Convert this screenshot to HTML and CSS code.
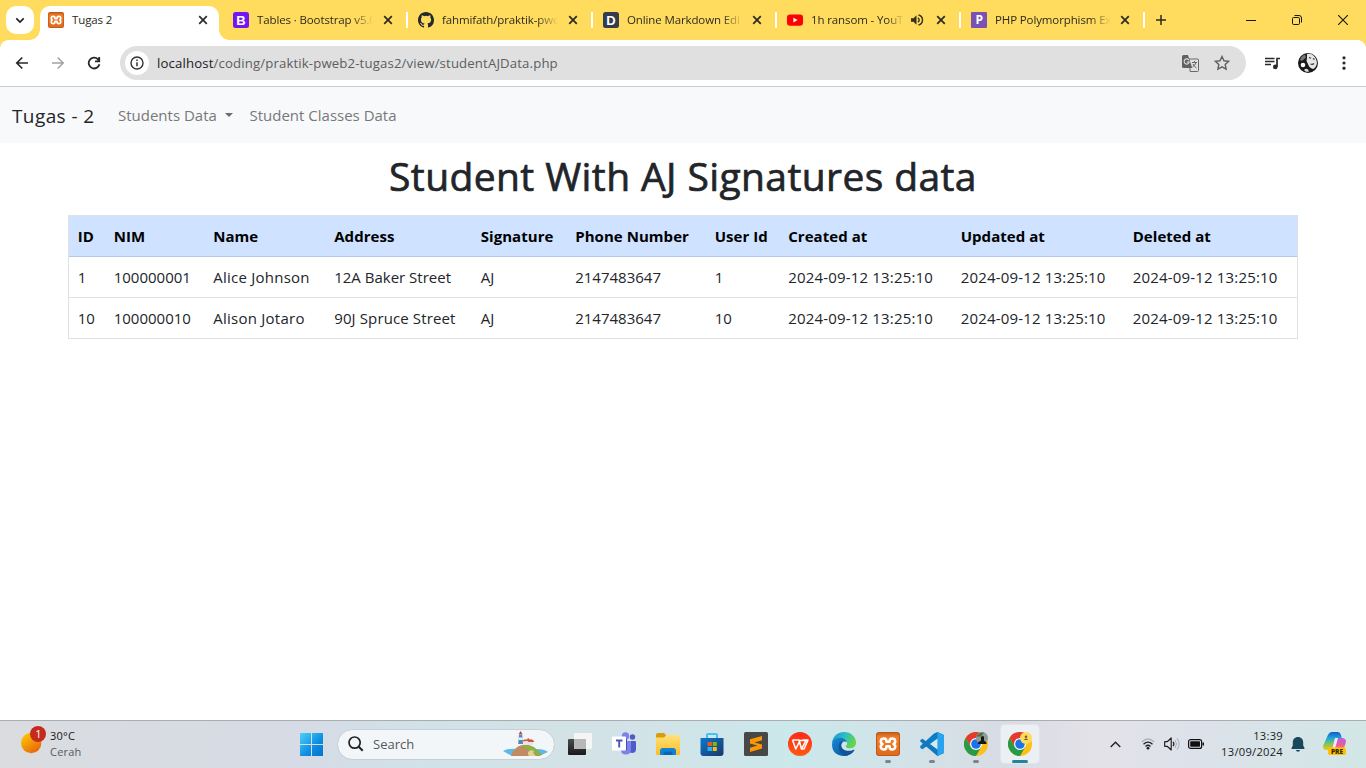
FILE: index.html
```html
<!DOCTYPE html>
<html lang="en">
<head>
<meta charset="utf-8">
<title>Tugas 2</title>
<link rel="stylesheet" href="styles.css">
</head>
<body>
<svg class="defs" width="0" height="0">
  <defs>
    <linearGradient id="gx" x1="0" y1="0" x2="0" y2="1"><stop offset="0" stop-color="#c9611c"/><stop offset=".2" stop-color="#f47d28"/><stop offset="1" stop-color="#e06a1c"/></linearGradient>
    <symbol id="xampp" viewBox="0 0 24 24"><rect width="24" height="24" rx="3" fill="#b9591b"/><rect x="1" y="1" width="22" height="22" rx="2" fill="url(#gx)"/><path d="M8 6.500C4 6.500 4 11 6.500 12 4 13 4 17.500 8 17.500q2.500 0 2.500-3.300h3q0 3.300 2.500 3.300c4 0 4-4.500 1.500-5.500 2.500-1 2.500-5.500-1.500-5.500q-2.500 0-2.500 3.300h-3Q10.500 6.500 8 6.500z" fill="none" stroke="#fff" stroke-width="2.600" stroke-linejoin="round"/></symbol>
    <symbol id="close" viewBox="0 0 10 10"><path d="M1.200 1.200l7.600 7.600M8.800 1.200L1.200 8.800" stroke="#2b2a26" stroke-width="1.700" fill="none"/></symbol>
    <symbol id="chrome" viewBox="0 0 24 24"><circle cx="12" cy="12" r="12" fill="#fbc116"/><path d="M12 6h10.400A12 12 0 0 0 1.600 6l5.200 9z" fill="#e33b2e"/><path d="M1.600 6A12 12 0 0 0 12 24l5.200-9H6.800z" fill="#269a47"/><circle cx="12" cy="12" r="6" fill="#fff"/><circle cx="12" cy="12" r="4.800" fill="#1a73e8"/></symbol>
  </defs>
</svg>
<div class="screen">
  <header class="tabs">
    <button class="tab-search"><svg width="10" height="7" viewBox="0 0 10 7"><path d="M1.300 1.300L5 5l3.700-3.700" fill="none" stroke="#222" stroke-width="1.700"/></svg></button>
    <div class="tab active"><svg class="fav"><use href="#xampp"/></svg><span class="title">Tugas 2</span><svg class="x"><use href="#close"/></svg></div>
    <div class="tab"><svg class="fav" viewBox="0 0 16 16"><rect width="16" height="16" rx="2.500" fill="#7416f4"/><text x="8" y="12.700" class="fav-b">B</text></svg><span class="title fade">Tables · Bootstrap v5.0</span><svg class="x"><use href="#close"/></svg></div>
    <div class="tab sep"><svg class="fav" viewBox="0 0 16 16"><path fill="#24292f" d="M8 0C3.580 0 0 3.580 0 8c0 3.540 2.290 6.530 5.470 7.590.4.070.55-.17.55-.38 0-.19-.01-.82-.01-1.490-2.010.37-2.530-.49-2.690-.94-.09-.23-.48-.94-.82-1.130-.28-.15-.68-.52-.01-.53.63-.01 1.080.58 1.230.82.72 1.210 1.870.87 2.330.66.07-.52.28-.87.51-1.070-1.780-.2-3.640-.89-3.640-3.950 0-.87.31-1.590.82-2.150-.08-.2-.36-1.020.08-2.120 0 0 .67-.21 2.200.82a7.500 7.500 0 0 1 4 0c1.530-1.040 2.200-.82 2.200-.82.44 1.100.16 1.920.08 2.120.51.56.82 1.270.82 2.150 0 3.070-1.870 3.750-3.650 3.950.29.25.54.73.54 1.480 0 1.070-.01 1.930-.01 2.200 0 .21.15.46.55.38A8 8 0 0 0 16 8c0-4.420-3.580-8-8-8z"/></svg><span class="title fade">fahmifath/praktik-pwe</span><svg class="x"><use href="#close"/></svg></div>
    <div class="tab sep"><svg class="fav" viewBox="0 0 16 16"><rect width="16" height="16" rx="2.500" fill="#353d4c"/><text x="8" y="12.800" class="fav-b">D</text></svg><span class="title fade">Online Markdown Edi</span><svg class="x"><use href="#close"/></svg></div>
    <div class="tab sep"><svg class="fav" viewBox="0 0 16 16"><rect y="2.500" width="16" height="11.200" rx="3" fill="#f00"/><path d="M6.400 5.700v4.800l4.200-2.400z" fill="#fff"/></svg><span class="title fade audio">1h ransom - YouT</span><svg class="snd" viewBox="0 0 14 12"><path d="M1 4.200h2.500L6.500 1.300v9.400l-3-2.900H1z" fill="#33301f"/><path d="M8 3.700q2.400 2.300 0 4.600M8.500 1q4 1 4 5t-4 5" fill="none" stroke="#33301f" stroke-width="1.400"/></svg><svg class="x"><use href="#close"/></svg></div>
    <div class="tab sep"><svg class="fav" viewBox="0 0 16 16"><rect width="16" height="16" rx="1" fill="#7952b3"/><text x="8.200" y="12.300" class="fav-p">P</text></svg><span class="title fade">PHP Polymorphism Ex</span><svg class="x"><use href="#close"/></svg></div>
    <div class="newtab sep"><svg width="10" height="10" viewBox="0 0 10 10"><path d="M5 0v10M0 5h10" stroke="#2c2a20" stroke-width="1.500"/></svg></div>
    <div class="winbtns">
      <svg width="10" height="10" viewBox="0 0 10 10"><path d="M0 5.500h10" stroke="#17160f"/></svg>
      <svg width="10" height="10" viewBox="0 0 10 10" fill="none" stroke="#17160f"><rect x=".5" y="2.500" width="7" height="7" rx="1.200"/><path d="M2.500.5H7Q9.500.5 9.500 3v4.500"/></svg>
      <svg width="10" height="10" viewBox="0 0 10 10"><path d="M0 0l10 10M10 0L0 10" stroke="#17160f" stroke-width="1.100"/></svg>
    </div>
  </header>
  <div class="toolbar">
    <nav class="nav-icons">
      <svg width="14" height="14" viewBox="0 0 14 14" fill="none" stroke="#26282b" stroke-width="1.700"><path d="M13 7H2M7.300 1.500L1.800 7l5.500 5.500"/></svg>
      <svg width="14" height="14" viewBox="0 0 14 14" fill="none" stroke="#a0a2a5" stroke-width="1.500"><path d="M1 7h11M6.700 1.500L12.200 7l-5.500 5.500"/></svg>
      <svg width="14" height="14" viewBox="0 0 14 14" fill="none" stroke="#26282b" stroke-width="1.800"><path d="M12.400 8.300A5.400 5.400 0 1 1 11 3.300l1.200 1.300M12.200 1v4.300H8"/></svg>
    </nav>
    <div class="address">
      <span class="info"><svg width="14" height="14" viewBox="0 0 14 14"><circle cx="7" cy="7" r="6" fill="none" stroke="#333" stroke-width="1.400"/><path d="M7 6.200v4.100M7 3.500v1.500" stroke="#333" stroke-width="1.500"/></svg></span>
      <span class="url"><b>localhost</b>/coding/praktik-pweb2-tugas2/view/studentAJData.php</span>
      <svg class="translate" width="17" height="17" viewBox="0 0 17 17"><path d="M7 4h8.500q1 0 1 1v10.500q0 1-1 1H8.200z" fill="#e0e0e0" stroke="#66686b"/><path d="M1.500 0H6l4.200 13H1.500Q0 13 0 11.500v-10Q0 0 1.500 0z" fill="#5f6164"/><path d="M7 5.200A2.600 2.600 0 1 0 7.300 7H4.800" stroke="#e0e0e0" fill="none" stroke-width="1.100"/><path d="M10 7.500h5M12.500 6v1.500M14 7.500q-.7 2.800-3.500 4.500M11 9q1 2.400 3.500 4" stroke="#66686b" fill="none"/></svg>
      <svg class="star" width="16" height="16" viewBox="0 0 16 16"><path d="M8 1.500l2 4.300 4.600.5-3.400 3.200.9 4.700L8 11.900l-4.100 2.300.9-4.700L1.400 6.300 6 5.800z" fill="none" stroke="#5f6164" stroke-width="1.400"/></svg>
    </div>
    <div class="tools">
      <svg width="15" height="13" viewBox="0 0 15 13"><path d="M0 1.500h9.500M0 4.500h9.500M0 7.500h6" stroke="#28292c" stroke-width="1.600"/><path d="M12 10V1.500h3" fill="none" stroke="#28292c" stroke-width="1.700"/><circle cx="10.300" cy="9.900" r="2.300" fill="#28292c"/></svg>
      <svg width="20" height="20" viewBox="0 0 20 20"><circle cx="10" cy="10" r="10" fill="#191919"/><path d="M9 1q4-1 7 2 3 3 3 7-1 5-4 6-4-1-5-5L8.500 8 9 5z" fill="#e6e6e6"/><path d="M2 7q1-4 5-5.500l1 3L4 8z" fill="#777"/><path d="M11 4.500l2 .8M15 5.500l1.500 1M12.500 11q2 1 3.500-.5" stroke="#333" stroke-width="1.100" fill="none"/><circle cx="5" cy="12" r="2.300" fill="#fff"/><path d="M6 17q2-2 4-.5l1 2.300H8z" fill="#ddd"/></svg>
      <svg width="4" height="14" viewBox="0 0 4 14" fill="#28292c"><circle cx="2" cy="1.800" r="1.600"/><circle cx="2" cy="7" r="1.600"/><circle cx="2" cy="12.200" r="1.600"/></svg>
    </div>
  </div>
  <main class="page">
    <nav class="navbar"><a class="brand">Tugas - 2</a><a class="link l1">Students Data<i class="caret"></i></a><a class="link l2">Student Classes Data</a></nav>
    <h1>Student With AJ Signatures data</h1>
    <table>
      <colgroup><col class="c1"><col class="c2"><col class="c3"><col class="c4"><col class="c5"><col class="c6"><col class="c7"><col class="c8"><col class="c9"><col></colgroup>
      <thead><tr><th>ID</th><th>NIM</th><th>Name</th><th>Address</th><th>Signature</th><th>Phone Number</th><th>User Id</th><th>Created at</th><th>Updated at</th><th>Deleted at</th></tr></thead>
      <tbody>
        <tr><td>1</td><td>100000001</td><td class="name">Alice Johnson</td><td>12A Baker Street</td><td>AJ</td><td>2147483647</td><td>1</td><td class="date">2024-09-12 13:25:10</td><td class="date">2024-09-12 13:25:10</td><td class="date">2024-09-12 13:25:10</td></tr>
        <tr><td>10</td><td>100000010</td><td class="name">Alison Jotaro</td><td class="addr">90J Spruce Street</td><td>AJ</td><td>2147483647</td><td>10</td><td class="date">2024-09-12 13:25:10</td><td class="date">2024-09-12 13:25:10</td><td class="date">2024-09-12 13:25:10</td></tr>
      </tbody>
    </table>
  </main>
  <footer class="taskbar">
    <div class="weather">
      <svg width="26" height="28" viewBox="0 0 26 28"><defs><linearGradient id="sun" x1="0" y1="0" x2=".7" y2="1"><stop offset="0" stop-color="#ffd400"/><stop offset="1" stop-color="#e8640c"/></linearGradient></defs><circle cx="10.200" cy="17" r="10.200" fill="url(#sun)"/><circle cx="17" cy="8" r="8" fill="#c42b1c"/><text x="17.500" y="12" class="badge-no">1</text></svg>
      <div><p class="temp">30°C</p><p class="cond">Cerah</p></div>
    </div>
    <svg class="win" width="23" height="23" viewBox="0 0 23 23"><defs><linearGradient id="wn" x1="0" y1="0" x2="23" y2="23" gradientUnits="userSpaceOnUse"><stop offset="0" stop-color="#4cd0fb"/><stop offset=".6" stop-color="#0c8de0"/><stop offset="1" stop-color="#0672ce"/></linearGradient></defs><path d="M0 0h11v11H0zM12 0h11v11H12zM0 12h11v11H0zM12 12h11v11H12z" fill="url(#wn)"/></svg>
    <div class="search">
      <svg width="16" height="16" viewBox="0 0 16 16"><circle cx="6.600" cy="6.600" r="5.600" fill="none" stroke="#222" stroke-width="1.700"/><path d="M10.700 10.700l4 4" stroke="#222" stroke-width="2"/></svg>
      <span>Search</span>
      <svg class="island" width="46" height="26" viewBox="0 0 46 26"><path d="M0 20q5-3 13-2h20q9 0 12 3l-9 4H9z" fill="#5db9e6"/><path d="M8 25q3-8 8-10 8-3 14 1l8 9z" fill="#c08b60"/><path d="M17 15q8-2 14 1l9 8H29q-6 0-3-4-2-3-9-5z" fill="#8bb24a"/><path d="M26 25q-3-4 2-6l3 1q-2 2 2 5z" fill="#e5cf95"/><path d="M16 4h3.200l.8 9h-4.800z" fill="#4c8cbc"/><path d="M15.700 6.500h3.900V9h-3.900z" fill="#eef0f2"/><path d="M15.500 3.600L17.600 0l2.100 3.600z" fill="#b8404b"/><path d="M20 10.500h10V14H20z" fill="#e9e4df"/><path d="M19 10.500l2-2h3l1-1.500 2 1.500h2.500l2 2.500h-6l-1-1z" fill="#cf5549"/></svg>
    </div>
    <div class="apps">
      <div class="app"><svg viewBox="0 0 24 24"><defs><linearGradient id="tv" x1="0" y1="0" x2="0" y2="1"><stop offset="0" stop-color="#4b4b4b"/><stop offset="1" stop-color="#191919"/></linearGradient></defs><rect y="7" width="18" height="16" rx="1" fill="url(#tv)"/><rect x="6" y="1" width="18" height="16" rx="1" fill="#f5f5f5"/><path d="M6 7h12v10H7q-1 0-1-1z" fill="#b8b8b8"/></svg></div>
      <div class="app"><svg viewBox="0 0 24 24"><circle cx="13.500" cy="4" r="3.700" fill="#7b83eb"/><circle cx="20.500" cy="5" r="2.700" fill="#5059c9"/><path d="M17 9h6q1 0 1 1v7q0 4-4 4-3 0-3-4z" fill="#5059c9"/><path d="M9 9h10v8q0 5.500-5 5.500T9 18z" fill="#7b83eb"/><path d="M9 7h6v11H9z" fill="#454db5"/><rect y="4.500" width="14" height="14" rx="1" fill="#fff"/><path d="M4 8.500h6.500M7.200 8.500V15.500" stroke="#4b53bc" stroke-width="1.900"/></svg></div>
      <div class="app"><svg viewBox="0 0 24 24"><defs><linearGradient id="fl" x1="0" y1="0" x2="0" y2="1"><stop offset="0" stop-color="#ffe17a"/><stop offset="1" stop-color="#fcbd24"/></linearGradient></defs><path d="M0 3q0-2 2-2h6l3 3v4H0z" fill="#d99b12"/><path d="M0 5.500h8L10.500 3H23q1 0 1 1v18q0 1-1 1H1q-1 0-1-1z" fill="url(#fl)"/><path d="M4 23v-4q0-3 3-3h10q3 0 3 3v4z" fill="#1083d7"/><path d="M7.500 19.500h9V23h-9z" fill="#0866b5"/></svg></div>
      <div class="app"><svg viewBox="0 0 24 24"><defs><linearGradient id="st" x1="0" y1="0" x2="1" y2="1"><stop offset="0" stop-color="#0a79cf"/><stop offset="1" stop-color="#1b3768"/></linearGradient></defs><path d="M7 6V3q0-1 1-1h8q1 0 1 1v3" fill="none" stroke="#42c2f2" stroke-width="2"/><path d="M.5 6h23v15q0 3-3 3h-17q-3 0-3-3z" fill="url(#st)"/><path d="M7.500 10H12v4H7.500z" fill="#f25022"/><path d="M12.800 10h4v4h-4z" fill="#7fba00"/><path d="M7.500 15H12v4H7.500z" fill="#29b1ef"/><path d="M12.800 15h4v4h-4z" fill="#ffb900"/></svg></div>
      <div class="app"><svg viewBox="0 0 24 24"><rect width="24" height="24" rx="1.500" fill="#484848"/><path d="M6 7.300L18 4v4.200l-7.500 2.300L18 12.500v4L6 20v-4.200l7.500-2.200L6 11.500z" fill="#ff9800"/></svg></div>
      <div class="app"><svg viewBox="0 0 24 24"><defs><linearGradient id="wp" x1="0" y1="0" x2="0" y2="1"><stop offset="0" stop-color="#ff2a17"/><stop offset="1" stop-color="#ff5a14"/></linearGradient></defs><circle cx="12" cy="12" r="12" fill="url(#wp)"/><path d="M4.500 8H11l2.500 9L18 8.500h-6L7.800 17 4.500 8M14.500 8H20l-4 9h-3" fill="none" stroke="#fff" stroke-width="1.600" stroke-linejoin="round"/></svg></div>
      <div class="app"><svg viewBox="0 0 24 24"><defs><linearGradient id="e1" x1="0" y1="0" x2="1" y2=".4"><stop offset="0" stop-color="#1795d8"/><stop offset=".55" stop-color="#2bc0c2"/><stop offset="1" stop-color="#65d44b"/></linearGradient><linearGradient id="e2" x1="0" y1="0" x2="1" y2="1"><stop offset="0" stop-color="#1788d7"/><stop offset="1" stop-color="#0d4e96"/></linearGradient></defs><path d="M0 12C0 5 5 0 12 0s12 5 12 10.500c0 4-3 5.800-6 5.800-2.500 0-4.300-.8-4.300-1.800 0-.8 1.500-1.200 1.500-3.400C15 7 10 5 6 6.500 2.500 7.700.5 10 0 12z" fill="url(#e1)"/><path d="M0 12q1-6 8-6.200 6 0 7 4.700-1.500-1.700-4-.8c-4 2-2 7.600 1.800 9 3.500 1.300 6.700.5 9-1q.8-.2.500.5Q18 24 12 24 0 23.500 0 12z" fill="url(#e2)"/><path d="M8 10c-3 6 0 13 6.500 13.700 3-.7 5.800-2.200 7.800-5.500q.3-.7-.5-.5C16 20.500 9 18 9.300 13q.2-2 1.700-3.300-1.500-.5-3 .3z" fill="#11549c"/></svg></div>
      <div class="app open"><svg><use href="#xampp"/></svg></div>
      <div class="app open"><svg viewBox="0 0 24 24"><path d="M17.500 0L24 3v18l-6.500 3L7 14 2.500 17.300.3 16v-2L14 1.500z" fill="#0b7dc5"/><path d="M.3 8L2.500 6.700 17.500 18v6L.3 9.500z" fill="#1577bb"/><path d="M17.500 0L24 3v18l-6.500 3z" fill="#27a3ef"/><path d="M17.500 6.500V17.500L10 12z" fill="#d3eaee"/></svg></div>
      <div class="app open"><svg viewBox="0 0 24 24"><use href="#chrome" width="24" height="24"/><circle cx="18" cy="6" r="6" fill="#8d9d91"/><path d="M12.500 4.500Q15 0 20 .5l-3 4z" fill="#526c4e"/><path d="M14 12v-1.500l3-2V5q2-2 3 0v3.500l2.500 2V12z" fill="#161819"/></svg></div>
      <div class="app open current"><svg viewBox="0 0 24 24"><use href="#chrome" width="24" height="24"/><circle cx="18" cy="6" r="6" fill="#ffdb5c"/><circle cx="18" cy="4.800" r="1.300" fill="#746128"/><path d="M16 8q0-1.500 2-1.500T20 8z" fill="#746128"/></svg></div>
    </div>
    <div class="tray">
      <svg class="up" width="11" height="7" viewBox="0 0 11 7"><path d="M.7 6l4.800-4.800L10.300 6" fill="none" stroke="#222" stroke-width="1.400"/></svg>
      <svg class="wifi" width="14" height="12" viewBox="0 0 14 12" fill="none"><path d="M.7 4q6.300-6 12.600 0" stroke="#aeb3ba" stroke-width="1.200"/><path d="M2.500 6.300q4.500-4.500 9 0M4.500 8.500q2.500-2.500 5 0" stroke="#222" stroke-width="1.300"/><circle cx="7" cy="10.200" r="1.400" fill="#222"/></svg>
      <svg class="vol" width="16" height="14" viewBox="0 0 16 14" fill="none"><path d="M.7 4.700h2.500l4-3.700v12l-4-3.700H.7z" stroke="#222" stroke-width="1.200" stroke-linejoin="round"/><path d="M9 4.800q1.800 2.200 0 4.400" stroke="#222" stroke-width="1.200"/><path d="M11 3q3 4 0 8M13 1.300q4.300 5.700 0 11.400" stroke="#a8adb3"/></svg>
      <svg class="bat" width="16" height="10" viewBox="0 0 16 10"><rect x=".6" y=".6" width="13" height="8.800" rx="2" fill="none" stroke="#111" stroke-width="1.200"/><rect x="2.200" y="2.200" width="9.800" height="5.600" rx=".7" fill="#111"/><path d="M14.500 3.500h1.500v3h-1.500z" fill="#111"/></svg>
      <div class="clock"><p class="time">13:39</p><p class="day">13/09/2024</p></div>
      <svg class="bell" width="14" height="15" viewBox="0 0 14 15"><path d="M7 0c3.200 0 5.200 2.300 5.200 5.300v3.200L13.500 11q.4 1-.6 1H1.100q-1 0-.6-1l1.300-2.500V5.300C1.800 2.300 3.800 0 7 0zM4.800 13h4.400Q8.500 14.800 7 14.800T4.800 13z" fill="#17495b"/></svg>
      <svg class="copilot" width="24" height="24" viewBox="0 0 24 24"><defs><linearGradient id="ca" x1="0" y1="0" x2="0" y2="1"><stop offset="0" stop-color="#1857c7"/><stop offset=".35" stop-color="#1ba9db"/><stop offset=".65" stop-color="#78c95a"/><stop offset="1" stop-color="#f2c51b"/></linearGradient><linearGradient id="cb" x1="0" y1="0" x2="0" y2="1"><stop offset="0" stop-color="#b461ed"/><stop offset=".55" stop-color="#ec5d91"/><stop offset="1" stop-color="#ff9c50"/></linearGradient></defs><path d="M10 6h9q4 0 4 4l-2 6q-1 3-4 3H7z" fill="url(#cb)"/><path d="M9 0h6q2 0 3 3l.7 3H14q-2 0-3 3l-2 6q-1 3-3 3H3q-3 0-3-4l4-9Q6 0 9 0z" fill="url(#ca)"/><path d="M12 6h3l-3 11H9z" fill="#eee9f3"/><rect x="5" y="15.500" width="18" height="7.500" rx="2" fill="#ffc200"/><text x="14" y="21.800" class="pre">PRE</text></svg>
    </div>
  </footer>
</div>
</body>
</html>
```
FILE: styles.css
```css
* { box-sizing: border-box; margin: 0; padding: 0; }
body { font-family: "Open Sans", "Noto Sans", sans-serif; color: #212529; background: #fff; }
svg { display: block; flex: none; }
.defs { position: absolute; }
.screen { width: 1366px; height: 768px; display: flex; flex-direction: column; overflow: hidden; }

.tabs { height: 40px; flex: none; background: #ffdc5e; display: flex; padding: 6px 0 0 6px; }
.tab-search { width: 28px; height: 28px; margin-right: 6px; border: 0; border-radius: 10px; background: #fff; display: grid; place-items: center; flex: none; }
.tab { position: relative; width: 184px; height: 34px; display: flex; align-items: center; padding: 0 17px 6px 8px; flex: none; }
.tab:nth-child(3), .tab:nth-child(4) { width: 185px; }
.tab.active { width: 179px; margin-right: 6px; padding-right: 11px; background: #fff; border-radius: 10px 10px 0 0; }
.tab.active::before, .tab.active::after { content: ""; position: absolute; bottom: 0; width: 10px; height: 10px; }
.tab.active::before { left: -10px; background: radial-gradient(circle at 0 0, transparent 9.500px, #fff 10px); }
.tab.active::after { right: -10px; background: radial-gradient(circle at 100% 0, transparent 9.500px, #fff 10px); }
.sep::before { content: ""; position: absolute; left: -4px; top: 6px; width: 2px; height: 16px; background: #fff; }
.tab .fav { width: 16px; height: 16px; margin-right: 8px; }
.title { width: 116px; font-size: 11.500px; line-height: 20px; letter-spacing: -.12px; white-space: nowrap; color: #2c2a20; }
.fade { -webkit-mask-image: linear-gradient(90deg, #000 82%, transparent 100%); mask-image: linear-gradient(90deg, #000 82%, transparent 100%); }
.title.audio { width: 93px; }
.title + .x { margin-left: auto; }
.snd { width: 14px; height: 12px; margin-left: 6px; }
.snd + .x { margin-left: auto; }
.x { width: 10px; height: 10px; }
.fav-b { font: 700 13px "Liberation Sans", sans-serif; fill: #fff; text-anchor: middle; }
.fav-p { font: 700 12px "Open Sans", sans-serif; fill: #fff; text-anchor: middle; }
.newtab { position: relative; width: 40px; padding: 9px 0 0 9px; }
.winbtns { display: flex; gap: 36px; margin: 9px 18px 0 auto; }

.toolbar { height: 47px; flex: none; display: flex; align-items: center; border-bottom: 1px solid #c8cccc; position: relative; }
.toolbar::before, .toolbar::after { content: ""; position: absolute; top: 0; width: 8px; height: 8px; }
.toolbar::before { left: 0; background: radial-gradient(circle at 100% 100%, transparent 7.500px, #ffdc5e 8px); }
.toolbar::after { right: 0; background: radial-gradient(circle at 0 100%, transparent 7.500px, #ffdc5e 8px); }
.nav-icons { display: flex; gap: 22px; padding-left: 15px; width: 120px; }
.address { width: 1126px; height: 34px; border-radius: 17px; background: #e0e0e0; display: flex; align-items: center; padding-left: 5px; }
.info { width: 24px; height: 24px; border-radius: 50%; background: #fff; display: grid; place-items: center; }
.url { font-size: 13.200px; letter-spacing: .14px; color: #5b5e62; margin-left: 8px; white-space: nowrap; }
.url b { font-weight: 400; color: #202124; }
.translate { margin-left: auto; }
.star { margin: 0 16px 0 15px; }
.tools { display: flex; align-items: center; padding-left: 19px; }
.tools svg:nth-child(2) { margin: 0 24px 0 18px; }

.page { flex: 1; background: #fff; }
.navbar { height: 56px; display: flex; align-items: center; background: #f8f9fa; padding-left: 12px; white-space: nowrap; }
.brand { font-size: 19px; letter-spacing: .4px; line-height: 28px; padding-top: 1px; width: 106px; }
.link { font-size: 15px; color: #777879; display: flex; align-items: center; }
.l1 { width: 131.500px; }
.caret { border: 4px solid transparent; border-top-color: #6c6d6e; border-bottom: 0; margin-left: 8px; }
h1 { font-size: 39px; font-weight: 400; -webkit-text-stroke: .7px #212529; letter-spacing: .4px; line-height: 48px; text-align: center; margin: 9px 0 15px; white-space: nowrap; }
table { width: 1230px; margin: 0 auto; table-layout: fixed; border-collapse: separate; border-spacing: 0; border: 1px solid #dee2e6; border-bottom: 0; font-size: 15px; }
th, td { height: 41px; padding: 0 0 1px 8.700px; text-align: left; white-space: nowrap; line-height: 24px; border-bottom: 1px solid #dee2e6; }
th { background: #cfe2ff; color: #000; border-color: #b4c7e4; letter-spacing: .05px; }
.date { letter-spacing: .18px; }
.name { letter-spacing: .25px; }
.addr { letter-spacing: .12px; }
.c1 { width: 36px; } .c2 { width: 99.500px; } .c3 { width: 121px; } .c4 { width: 146.500px; } .c5 { width: 94.500px; }
.c6 { width: 139.500px; } .c7 { width: 73.500px; } .c8 { width: 172.500px; } .c9 { width: 172px; }

.taskbar { height: 48px; flex: none; border-top: 1px solid #a9adb0; padding-bottom: 1px; display: flex; align-items: center; background: linear-gradient(90deg, #dadcdf 0, #d6dbe5 300px, #d0e2e8 430px, #d3e2e6 620px, #cbe8eb 790px, #cfe5ea 860px, #d8dce4 1000px, #e4e2e9 1100px, #dce2ea 1200px, #d2e7e6 1366px); }
.weather { display: flex; align-items: flex-start; width: 300px; padding-left: 21px; }
.weather svg { margin-right: 3px; margin-top: -2px; }
.weather p { font-size: 11px; line-height: 16px; letter-spacing: .2px; }
.temp { color: #161616; }
.cond { color: #555a60; }
.badge-no { font-size: 11px; fill: #fff; text-anchor: middle; }
.search { width: 218px; height: 31px; margin-left: 14px; border-radius: 16px; background: #f2f6f9; border: 1px solid #c7d0d5; display: flex; align-items: center; padding-left: 10px; font-size: 13px; color: #55585c; flex: none; }
.search span { margin-left: 9px; }
.island { margin: 0 5px 0 auto; }
.apps { display: flex; margin-left: 6px; gap: 6px; }
.app { width: 38px; height: 38px; padding: 7px; border-radius: 4px; position: relative; }
.app svg { width: 24px; height: 24px; }
.open::after { content: ""; position: absolute; left: 16px; bottom: 0; width: 6px; height: 3px; border-radius: 2px; background: #7c848a; }
.current { background: #eceff3; box-shadow: 0 0 0 1px #e1e4e9; }
.current::after { left: 11px; width: 16px; background: #26849a; }
.tray { display: flex; align-items: center; margin-left: auto; padding-right: 19px; }
.wifi { margin-left: 20px; }
.vol { margin-left: 9px; }
.bat { margin-left: 8px; }
.clock { width: 79px; text-align: right; font-size: 11.200px; letter-spacing: .25px; line-height: 16px; color: #1b1b1b; }
.bell { margin-left: 8px; }
.copilot { margin-left: 18px; }
.pre { font: 800 6.500px "Open Sans", sans-serif; fill: #3a2a00; text-anchor: middle; }
```
